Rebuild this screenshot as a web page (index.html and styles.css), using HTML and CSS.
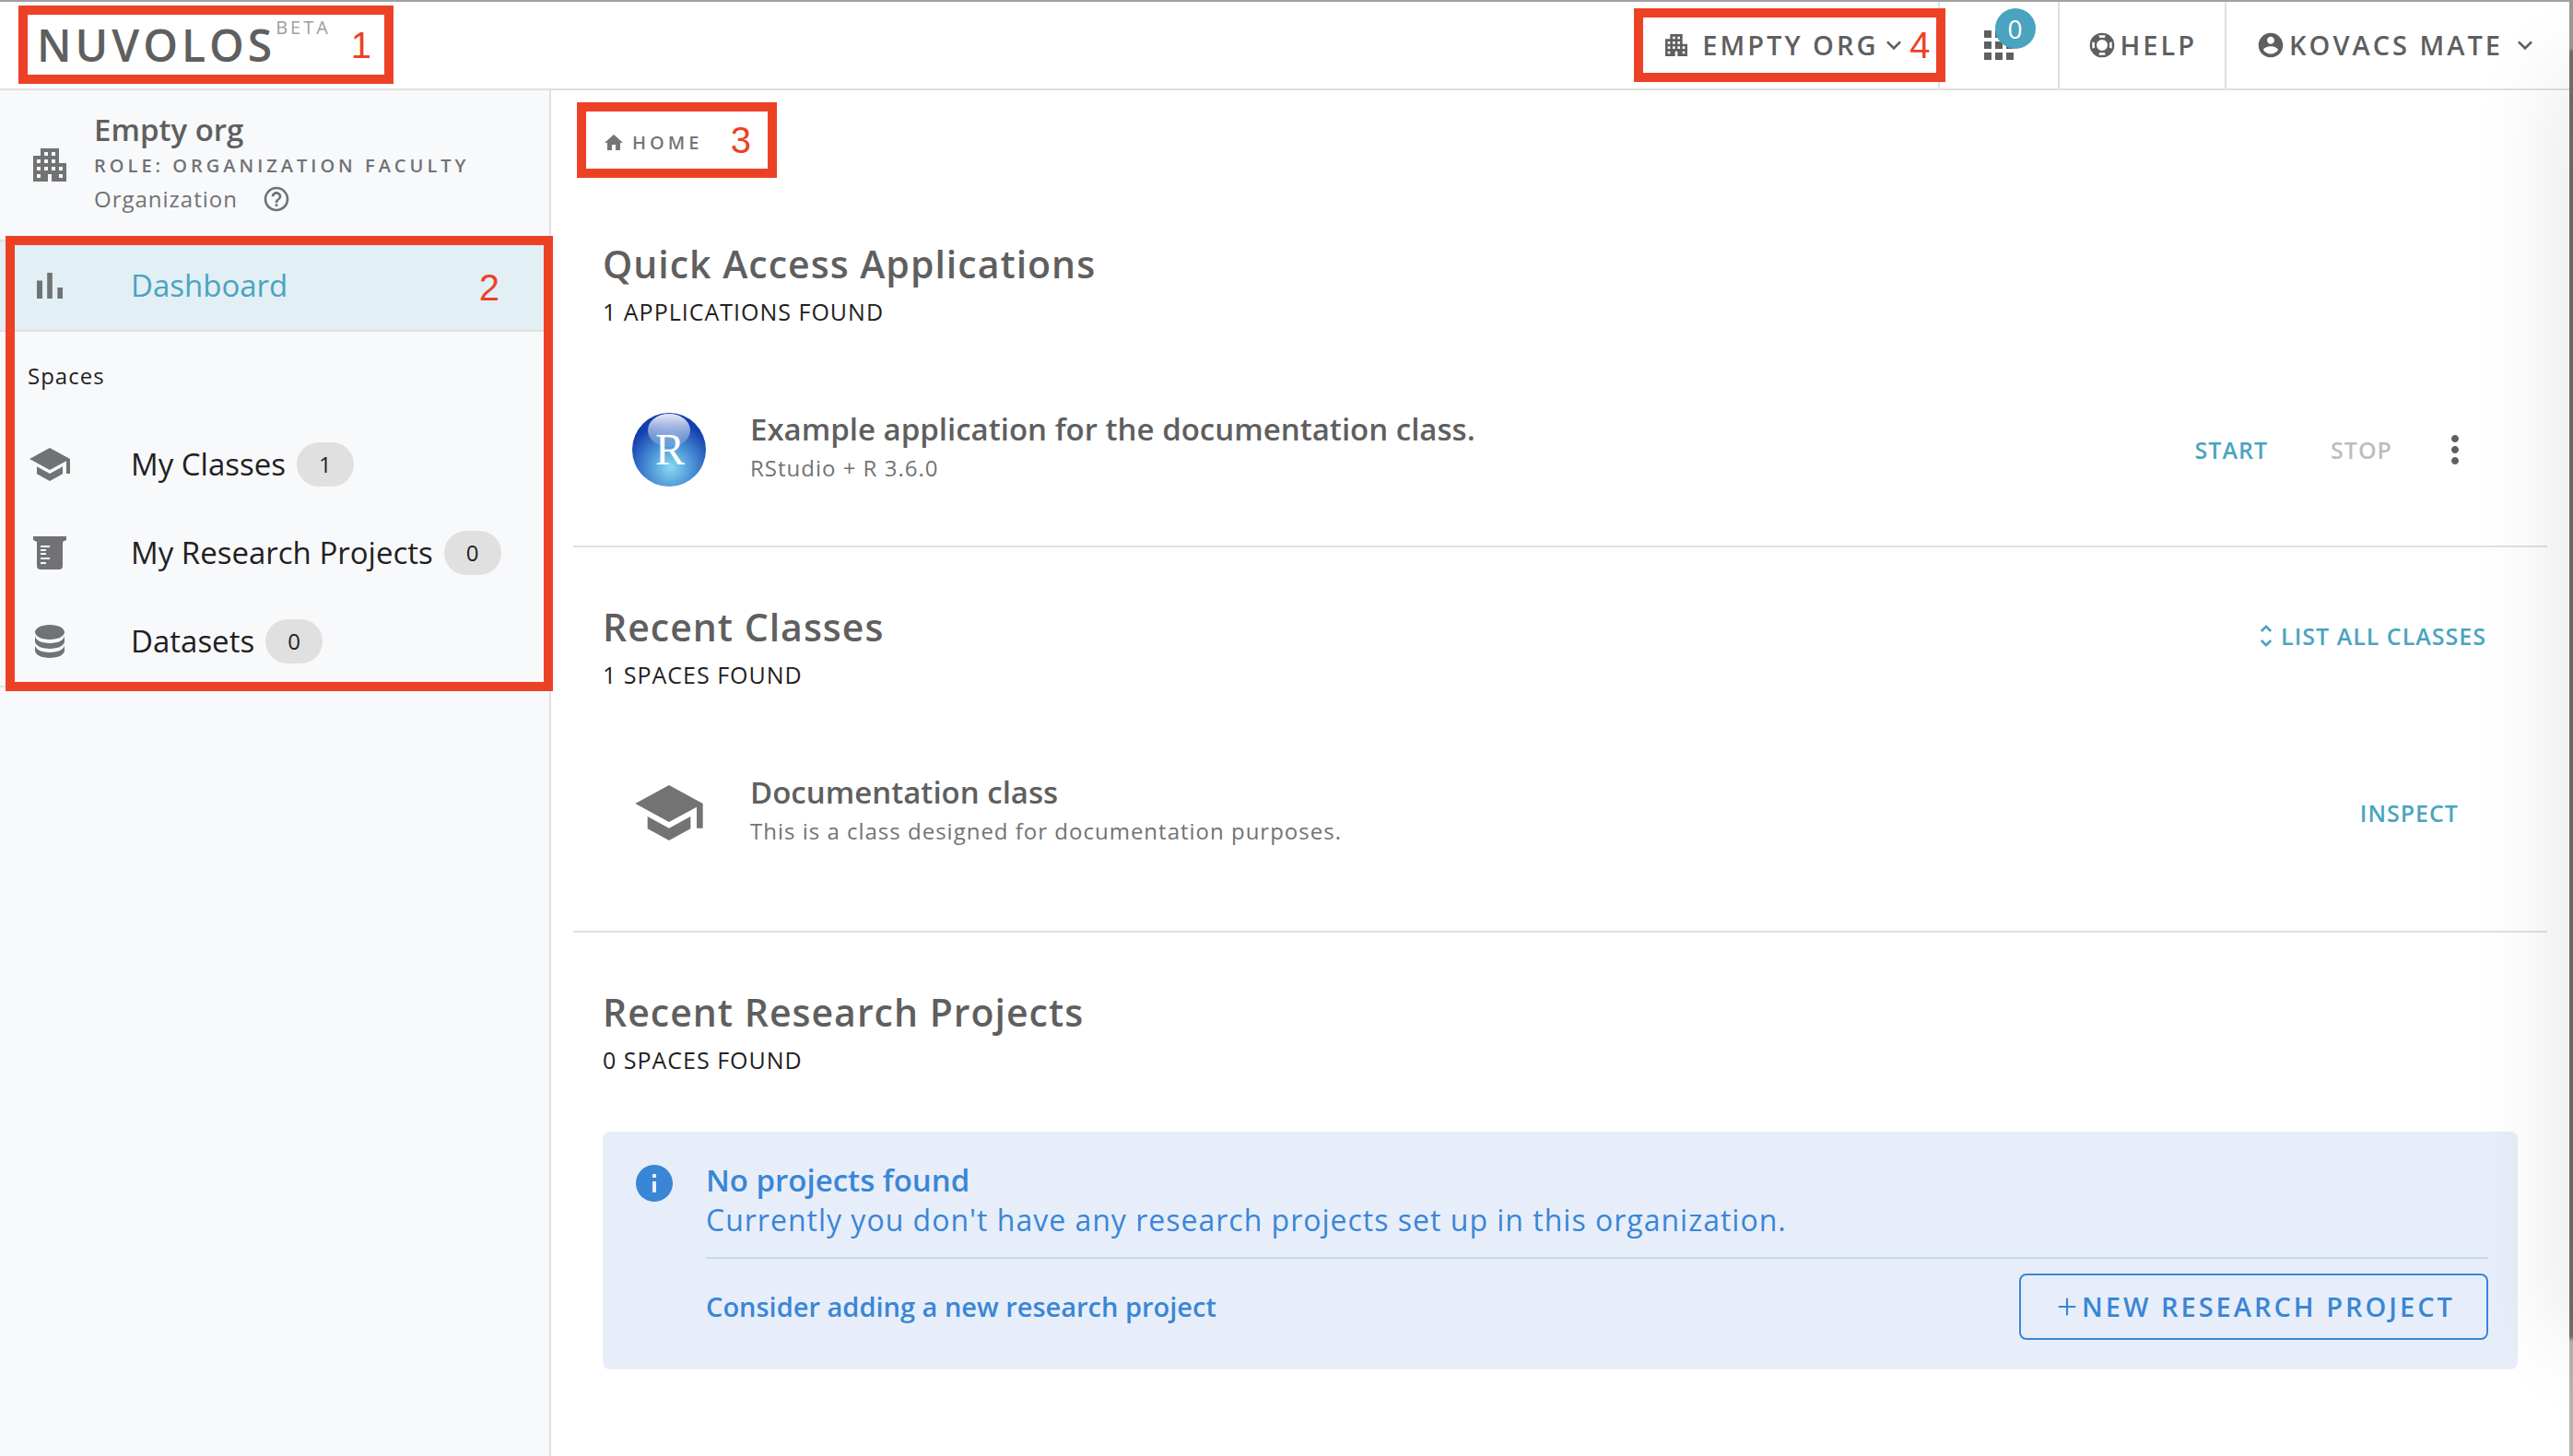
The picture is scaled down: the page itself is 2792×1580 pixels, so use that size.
FILE: index.html
```html
<!DOCTYPE html>
<html lang="en">
<head>
<meta charset="utf-8">
<meta name="viewport" content="width=device-width, initial-scale=1">
<title>Nuvolos</title>
<link rel="stylesheet" href="styles.css">
</head>
<body>
<svg class="sprite" aria-hidden="true">
  <symbol id="i-apartment" viewBox="0 0 24 24"><path d="M17 11V3H7v4H3v14h8v-4h2v4h8V11h-4zM7 19H5v-2h2v2zm0-4H5v-2h2v2zm0-4H5V9h2v2zm4 4H9v-2h2v2zm0-4H9V9h2v2zm0-4H9V5h2v2zm4 8h-2v-2h2v2zm0-4h-2V9h2v2zm0-4h-2V5h2v2zm4 12h-2v-2h2v2zm0-4h-2v-2h2v2z"/></symbol>
  <symbol id="i-school" viewBox="0 0 24 24"><path d="M5 13.18v4L12 21l7-3.820v-4L12 17l-7-3.820zM12 3L1 9l11 6 9-4.910V17h2V9L12 3z"/></symbol>
  <symbol id="i-chevron" viewBox="0 0 24 24"><path d="M7.410 8.580L12 13.170l4.590-4.590L18 10l-6 6-6-6z"/></symbol>
</svg>
<div class="window">
  <header class="topbar">
    <a class="brand" href="#"><span class="brand-name">NUVOLOS</span><sup class="brand-tag">BETA</sup></a>
    <span class="mark mark-brand">1</span>
    <div class="topbar-actions">
      <div class="cell cell-org">
        <button class="nav-button org-button" type="button"><svg class="icon-32"><use href="#i-apartment"/></svg><span class="org-name">EMPTY ORG</span><svg class="icon-32"><use href="#i-chevron"/></svg></button>
        <span class="mark mark-org">4</span>
      </div>
      <div class="cell cell-apps">
        <button class="nav-button apps-button" type="button" aria-label="Running applications"><svg class="icon-48" viewBox="0 0 24 24"><path d="M4 8h4V4H4v4zm6 12h4v-4h-4v4zm-6 0h4v-4H4v4zm0-6h4v-4H4v4zm6 0h4v-4h-4v4zm6-10v4h4V4h-4zm-6 4h4V4h-4v4zm6 6h4v-4h-4v4zm0 6h4v-4h-4v4z"/></svg><span class="badge">0</span></button>
      </div>
      <div class="cell cell-help">
        <a class="nav-button" href="#"><svg class="icon-32" viewBox="0 0 24 24"><path fill-rule="evenodd" d="M12 2a10 10 0 1 0 0 20 10 10 0 0 0 0-20zm0 5.500a4.500 4.500 0 1 1 0 9 4.500 4.500 0 0 1 0-9zM9.200 4h5.600l-.9 2.200a6 6 0 0 0-3.800 0zM9.200 20h5.600l-.9-2.200a6 6 0 0 1-3.800 0zM4 9.200v5.600l2.200-.9a6 6 0 0 1 0-3.800zM20 9.200v5.600l-2.200-.9a6 6 0 0 0 0-3.800z"/></svg><span>HELP</span></a>
      </div>
      <div class="cell cell-user">
        <button class="nav-button" type="button"><svg class="icon-32" viewBox="0 0 24 24"><path d="M12 2C6.480 2 2 6.480 2 12s4.480 10 10 10 10-4.480 10-10S17.520 2 12 2zm0 3c1.660 0 3 1.340 3 3s-1.340 3-3 3-3-1.340-3-3 1.340-3 3-3zm0 14.200c-2.500 0-4.710-1.280-6-3.220.03-1.990 4-3.080 6-3.080 1.990 0 5.970 1.090 6 3.080-1.290 1.940-3.500 3.220-6 3.220z"/></svg><span class="user-name">KOVACS MATE</span><svg class="icon-32"><use href="#i-chevron"/></svg></button>
      </div>
    </div>
  </header>

  <div class="body">
    <nav class="sidebar" aria-label="Organization">
      <div class="org-card">
        <svg class="icon-48"><use href="#i-apartment"/></svg>
        <div class="org-text">
          <strong class="org-title">Empty org</strong>
          <span class="org-role">ROLE: ORGANIZATION FACULTY</span>
          <span class="org-kind">Organization <svg class="icon-32" viewBox="0 0 24 24"><path d="M11 18h2v-2h-2v2zm1-16C6.480 2 2 6.480 2 12s4.480 10 10 10 10-4.480 10-10S17.520 2 12 2zm0 18c-4.410 0-8-3.590-8-8s3.590-8 8-8 8 3.590 8 8-3.590 8-8 8zm0-14c-2.210 0-4 1.790-4 4h2c0-1.100.9-2 2-2s2 .9 2 2c0 2-3 1.750-3 5h2c0-2.250 3-2.500 3-5 0-2.210-1.790-4-4-4z"/></svg></span>
        </div>
      </div>
      <div class="menu">
        <a class="menu-item menu-active" href="#"><svg class="icon-48" viewBox="0 0 24 24"><path d="M5 9.200h3V19H5zM10.600 5h2.800v14h-2.800zm5.600 8H19v6h-2.800z"/></svg><span>Dashboard</span></a>
        <h2 class="menu-heading">Spaces</h2>
        <a class="menu-item" href="#"><svg class="icon-48"><use href="#i-school"/></svg><span>My Classes</span><span class="chip">1</span></a>
        <a class="menu-item" href="#"><svg class="icon-48" viewBox="0 0 24 24"><path fill-rule="evenodd" d="M3 3h18v2l-2 1v13a2 2 0 0 1-2 2H7a2 2 0 0 1-2-2V6L3 5zM7 8h5v1H7zM7 10h3v1H7zM7 12h3v1H7zM7 14.500h5v1H7zM7 17h3v1H7z"/></svg><span>My Research Projects</span><span class="chip">0</span></a>
        <a class="menu-item" href="#"><svg class="icon-48" viewBox="0 0 24 24"><path d="M12 3C7.580 3 4 4.790 4 7s3.580 4 8 4 8-1.790 8-4-3.580-4-8-4M4 9v3c0 2.210 3.580 4 8 4s8-1.790 8-4V9c0 2.210-3.580 4-8 4s-8-1.790-8-4m0 5v3c0 2.210 3.580 4 8 4s8-1.790 8-4v-3c0 2.210-3.580 4-8 4s-8-1.790-8-4z"/></svg><span>Datasets</span><span class="chip">0</span></a>
        <span class="mark mark-menu">2</span>
      </div>
    </nav>

    <main class="content">
      <div class="crumbs">
        <a class="crumb" href="#"><svg class="icon-24" viewBox="0 0 24 24"><path d="M10 20v-6h4v6h5v-8h3L12 3 2 12h3v8z"/></svg><span>HOME</span></a>
        <span class="mark mark-crumb">3</span>
      </div>

      <section class="section">
        <div class="section-head">
          <div><h1 class="section-title">Quick Access Applications</h1><p class="section-count">1 APPLICATIONS FOUND</p></div>
        </div>
        <div class="row">
          <svg class="icon-80" viewBox="0 0 80 80" role="img" aria-label="RStudio">
            <defs>
              <radialGradient id="ball" cx="0.52" cy="0.74" r="0.62"><stop offset="0" stop-color="#85dbf0"/><stop offset="0.5" stop-color="#4a90d4"/><stop offset="1" stop-color="#133eb0"/></radialGradient>
              <linearGradient id="gloss" x1="0" y1="0" x2="0" y2="1"><stop offset="0" stop-color="#fff" stop-opacity="0.900"/><stop offset="1" stop-color="#fff" stop-opacity="0.100"/></linearGradient>
            </defs>
            <circle cx="40" cy="40" r="40" fill="url(#ball)"/>
            <ellipse cx="40" cy="19" rx="23" ry="18" fill="url(#gloss)"/>
            <text class="ball-letter" x="41" y="56" text-anchor="middle">R</text>
          </svg>
          <div class="row-text"><h2 class="row-title">Example application for the documentation class.</h2><p class="row-sub">RStudio + R 3.6.0</p></div>
          <div class="row-actions">
            <button class="text-button" type="button">START</button>
            <button class="text-button" type="button" disabled>STOP</button>
            <button class="icon-button" type="button" aria-label="More"><svg class="icon-48" viewBox="0 0 24 24"><path d="M12 8c1.100 0 2-.9 2-2s-.9-2-2-2-2 .9-2 2 .9 2 2 2zm0 2c-1.100 0-2 .9-2 2s.9 2 2 2 2-.9 2-2-.9-2-2-2zm0 6c-1.100 0-2 .9-2 2s.9 2 2 2 2-.9 2-2-.9-2-2-2z"/></svg></button>
          </div>
        </div>
      </section>

      <section class="section section-classes">
        <div class="section-head">
          <div><h1 class="section-title">Recent Classes</h1><p class="section-count">1 SPACES FOUND</p></div>
          <a class="list-link" href="#"><svg class="icon-32" viewBox="0 0 24 24"><path d="M12 5.830L15.170 9l1.410-1.410L12 3 7.410 7.590 8.830 9 12 5.830zm0 12.340L8.830 15l-1.410 1.410L12 21l4.590-4.590L15.170 15 12 18.170z"/></svg><span>LIST ALL CLASSES</span></a>
        </div>
        <div class="row">
          <svg class="icon-80"><use href="#i-school"/></svg>
          <div class="row-text"><h2 class="row-title">Documentation class</h2><p class="row-sub">This is a class designed for documentation purposes.</p></div>
          <div class="row-actions"><a class="text-button" href="#">INSPECT</a></div>
        </div>
      </section>

      <section class="section">
        <div class="section-head">
          <div><h1 class="section-title">Recent Research Projects</h1><p class="section-count">0 SPACES FOUND</p></div>
        </div>
        <div class="alert">
          <svg class="icon-48" viewBox="0 0 24 24"><path d="M12 2C6.480 2 2 6.480 2 12s4.480 10 10 10 10-4.480 10-10S17.520 2 12 2zm1 15h-2v-6h2v6zm0-8h-2V7h2v2z"/></svg>
          <div class="alert-body">
            <h2 class="alert-title">No projects found</h2>
            <p class="alert-text">Currently you don't have any research projects set up in this organization.</p>
            <div class="alert-foot">
              <strong class="alert-hint">Consider adding a new research project</strong>
              <button class="outline-button" type="button"><svg class="icon-32" viewBox="0 0 24 24"><path d="M19 12.800h-6.200V19h-1.600v-6.200H5v-1.600h6.200V5h1.600v6.200H19z"/></svg><span>NEW RESEARCH PROJECT</span></button>
            </div>
          </div>
        </div>
      </section>
    </main>
  </div>
</div>
<div class="edge"></div>
</body>
</html>
```
FILE: styles.css
```css
* { box-sizing: border-box; }

:root {
  --ink: #5f5f5f;
  --text: #1f2122;
  --teal: #4aa4bf;
  --blue: #3a86d6;
  --line: #e0e0e0;
  --red: #ed4126;
}

body {
  margin: 0;
  min-height: 100vh;
  display: flex;
  position: relative;
  overflow-x: hidden;
  background: #fff;
  color: var(--text);
  font-family: "Open Sans", "Noto Sans", sans-serif;
  font-size: 24px;
  line-height: 32px;
  letter-spacing: 1px;
}

h1, h2, p { margin: 0; font-weight: 400; }
a { color: inherit; text-decoration: none; }
button { padding: 0; border: 0; background: none; color: inherit; font: inherit; letter-spacing: inherit; cursor: pointer; }
svg { display: block; flex: none; fill: currentColor; }
.sprite { position: absolute; width: 0; height: 0; }

.icon-24 { width: 24px; height: 24px; }
.icon-32 { width: 32px; height: 32px; }
.icon-48 { width: 48px; height: 48px; }
.icon-80 { width: 80px; height: 80px; }

.window { flex: 1; min-width: 0; display: flex; flex-direction: column; }

/* top bar */
.topbar {
  position: relative;
  display: flex;
  justify-content: space-between;
  height: 98px;
  border-top: 2px solid #a0a0a0;
  border-bottom: 2px solid var(--line);
  color: var(--ink);
}
.brand { display: flex; align-items: center; padding-left: 40px; }
.brand-name { font-size: 48px; font-weight: 600; line-height: 64px; letter-spacing: 4px; }
.brand-tag { align-self: flex-start; margin-top: 16px; font-size: 20px; line-height: 24px; letter-spacing: 3px; color: #9e9e9e; }
.topbar-actions { display: flex; font-size: 29px; font-weight: 600; letter-spacing: 3px; }
.cell { position: relative; display: flex; align-items: center; border-right: 2px solid var(--line); }
.cell:last-child { border-right: 0; }
.nav-button { position: relative; display: flex; align-items: center; }
.cell-org { padding: 0 32px 0 30px; }
.org-name { margin-left: 12px; }
.cell-apps { padding: 0 40px; }
.cell-help { padding: 0 30px; }
.cell-help .nav-button, .cell-user .nav-button { gap: 4px; }
.cell-user { padding: 0 32px; }
.user-name { margin-right: 4px; }
.badge {
  position: absolute; left: 20px; top: -16px;
  width: 44px; height: 44px; border-radius: 50%;
  background: var(--teal); color: #fff;
  font-size: 28px; font-weight: 400; line-height: 44px; letter-spacing: 0; text-align: center;
}

/* numbered callouts */
.mark {
  position: absolute; z-index: 2;
  display: flex; align-items: center; justify-content: flex-end;
  border: 10px solid var(--red); color: var(--red);
  font: 40px/48px "Liberation Sans", Arial, sans-serif; letter-spacing: 0;
  pointer-events: none;
}
.mark-brand { left: 20px; top: 4px; width: 407px; height: 85px; padding-right: 14px; }
.mark-org { right: -8px; top: 7px; left: 0; height: 80px; padding-right: 6px; }
.mark-menu { inset: -6px -4px -6px 6px; align-items: flex-start; padding: 22px 48px 0 0; }
.mark-crumb { left: 4px; top: 13px; width: 217px; height: 82px; padding-right: 18px; }

/* sidebar */
.body { flex: 1; display: flex; }
.sidebar { flex: none; width: 598px; border-right: 2px solid var(--line); background: #f8f9fb; }
.org-card { display: flex; align-items: center; gap: 24px; height: 162px; padding-left: 30px; color: #707274; }
.org-text { display: flex; flex-direction: column; margin-bottom: 4px; }
.org-title { font-size: 33px; line-height: 40px; font-weight: 600; letter-spacing: 0; color: var(--ink); }
.org-role { font-size: 20px; line-height: 38px; font-weight: 600; letter-spacing: 4px; }
.org-kind { display: flex; align-items: center; gap: 26px; line-height: 34px; }
.menu { position: relative; border-top: 2px solid var(--line); border-bottom: 2px solid var(--line); font-size: 33px; letter-spacing: 0; }
.menu-item { display: flex; align-items: center; height: 96px; padding-left: 30px; }
.menu-item svg { margin-right: 64px; color: #707274; }
.menu-active { height: 98px; border-bottom: 2px solid var(--line); background: #e2eff5; color: var(--teal); }
.menu-heading { padding: 32px 30px; font-size: 24px; line-height: 32px; letter-spacing: 1px; }
.chip { min-width: 62px; height: 48px; margin-left: 12px; padding: 0 24px; border-radius: 24px; background: #e0e0e0; font-size: 24px; line-height: 48px; text-align: center; }

/* content */
.content { flex: 1; min-width: 0; padding: 0 24px; }
.crumbs { position: relative; height: 102px; padding: 44px 0 0 32px; color: #757575; }
.crumb { display: inline-flex; align-items: center; gap: 8px; font-size: 20px; line-height: 24px; font-weight: 600; letter-spacing: 4px; }
.section { padding: 56px 32px 60px; border-bottom: 2px solid var(--line); }
.section:last-child { border-bottom: 0; }
.section-classes { padding-bottom: 84px; }
.section-head { display: flex; align-items: flex-start; justify-content: space-between; }
.section-title { font-size: 41px; line-height: 60px; font-weight: 600; color: var(--ink); }
.section-count { font-size: 25px; line-height: 44px; }
.list-link { display: flex; align-items: center; margin: 24px 34px 0 0; font-size: 25px; font-weight: 600; color: var(--teal); }
.row { display: flex; align-items: center; gap: 48px; margin-top: 84px; padding-left: 32px; color: #737373; }
.row-text { flex: 1; margin-bottom: 4px; }
.row-title { font-size: 33px; line-height: 44px; font-weight: 600; letter-spacing: 0; color: var(--ink); }
.row-sub { line-height: 40px; }
.row-actions { display: flex; align-items: center; gap: 4px; padding-right: 32px; }
.text-button { padding: 0 32px; font-size: 25px; font-weight: 600; color: var(--teal); }
.text-button:disabled { color: #bdbdbd; }
.icon-button { margin: 0 12px 0 8px; color: var(--ink); }
.ball-letter { fill: #fff; font: 48px "Liberation Serif", serif; letter-spacing: 0; }

.alert { display: flex; gap: 32px; margin-top: 56px; padding: 32px; border-radius: 8px; background: #e7eefa; color: var(--blue); }
.alert-body { flex: 1; font-size: 32px; }
.alert-title { font-size: 33px; line-height: 42px; font-weight: 600; letter-spacing: 0; }
.alert-text { line-height: 44px; }
.alert-foot { display: flex; align-items: center; justify-content: space-between; margin-top: 18px; padding-top: 16px; border-top: 2px solid #c1d8f2; }
.alert-hint { font-size: 29px; font-weight: 600; letter-spacing: 0; }
.outline-button { display: flex; align-items: center; height: 72px; padding: 0 34px; border: 2px solid var(--blue); border-radius: 8px; font-size: 29px; font-weight: 600; letter-spacing: 3px; }

/* strip of the desktop at the right, with the shadow that falls on the page */
.edge { position: relative; z-index: 3; flex: none; width: 4px; background: linear-gradient(#9a9a9a 52px, #6e7070 56px calc(100% - 130px), #b4b4b4 calc(100% - 124px)); pointer-events: none; }
.edge::before { content: ""; position: absolute; left: 4px; top: 80px; bottom: 130px; width: 40px; box-shadow: 0 0 100px 4px rgba(0, 0, 0, 0.160); }
```
